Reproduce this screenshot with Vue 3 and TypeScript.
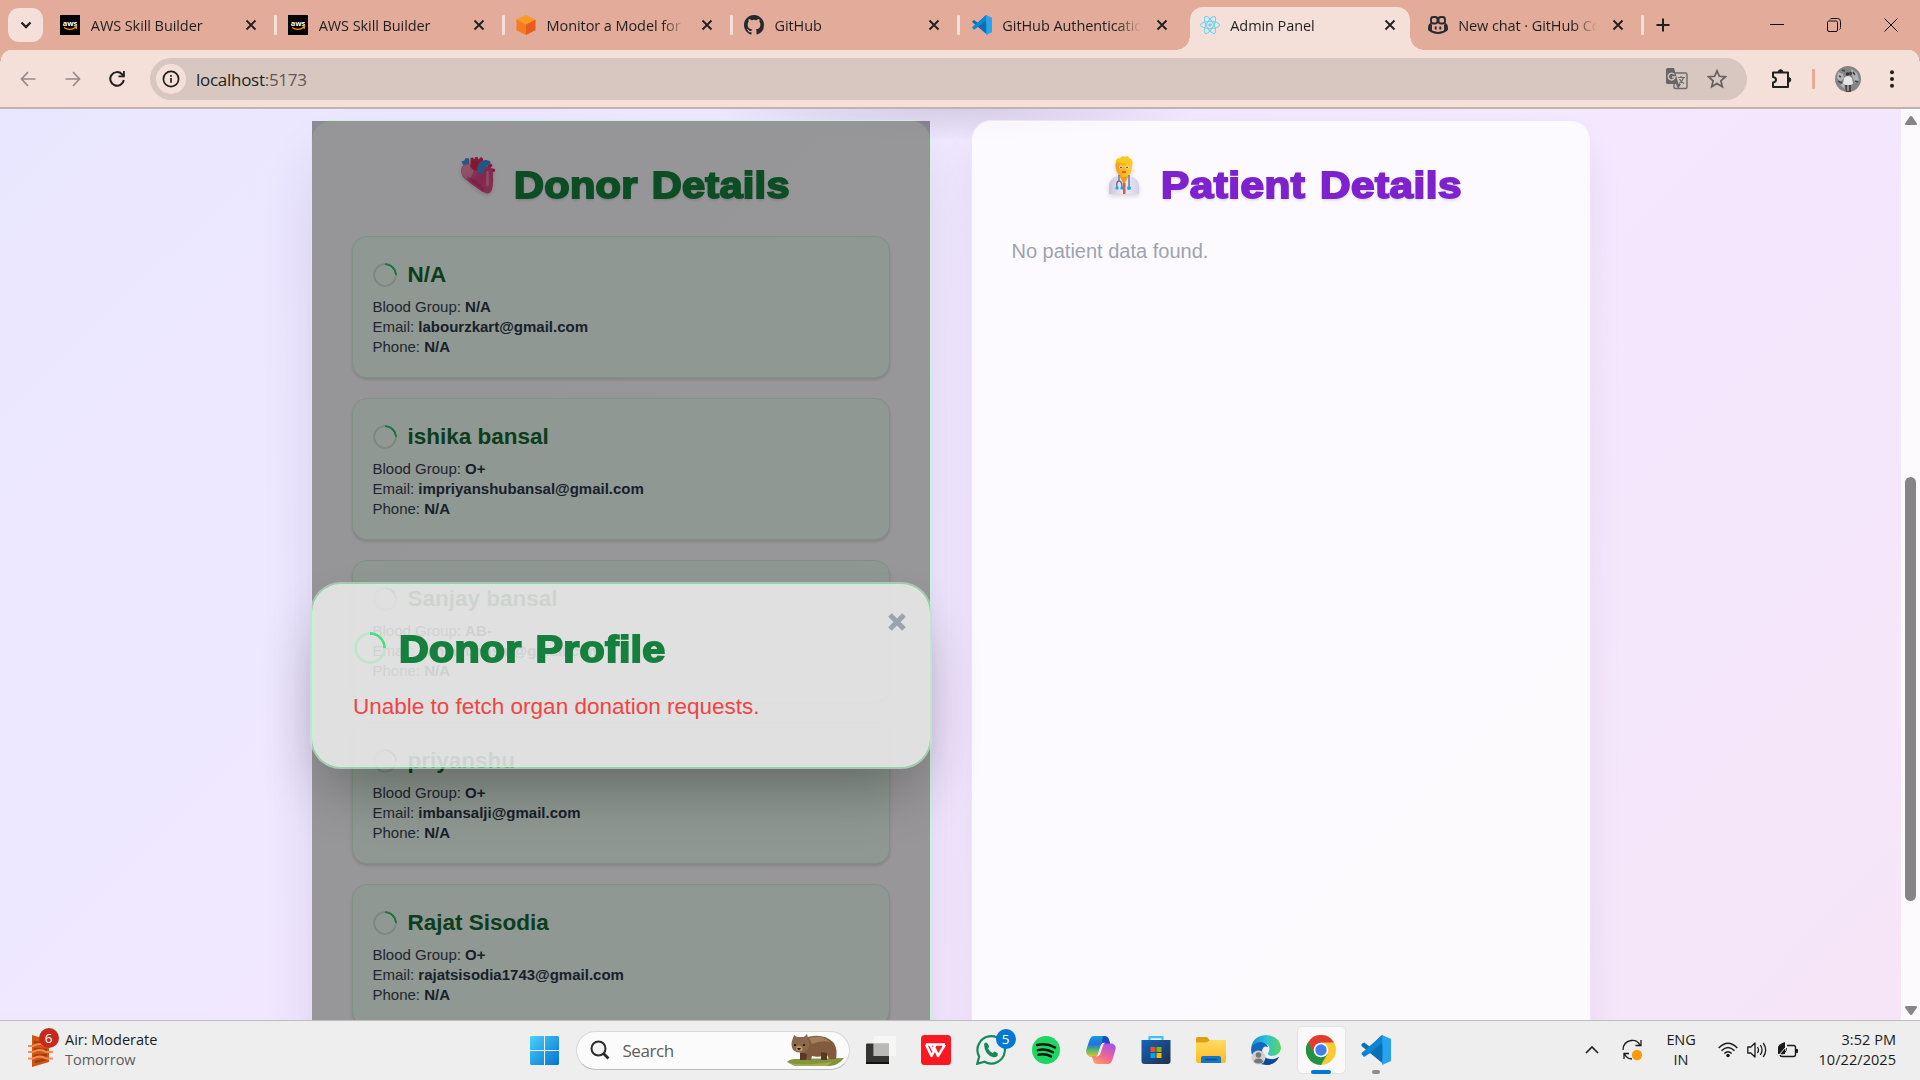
<script setup lang="ts">
interface Tab {
  icon: string
  title: string
  active?: boolean
}
interface Donor {
  name: string
  blood: string
  email: string
  phone: string
}

const tabs: Tab[] = [
  { icon: 'aws', title: 'AWS Skill Builder' },
  { icon: 'aws', title: 'AWS Skill Builder' },
  { icon: 'cube', title: 'Monitor a Model for Drift' },
  { icon: 'github', title: 'GitHub' },
  { icon: 'code', title: 'GitHub Authentication' },
  { icon: 'react', title: 'Admin Panel', active: true },
  { icon: 'copilot', title: 'New chat · GitHub Copilot' },
]

const donors: Donor[] = [
  { name: 'N/A', blood: 'N/A', email: 'labourzkart@gmail.com', phone: 'N/A' },
  { name: 'ishika bansal', blood: 'O+', email: 'impriyanshubansal@gmail.com', phone: 'N/A' },
  { name: 'Sanjay bansal', blood: 'AB-', email: 'sanjaybansal@gmail.com', phone: 'N/A' },
  { name: 'priyanshu', blood: 'O+', email: 'imbansalji@gmail.com', phone: 'N/A' },
  { name: 'Rajat Sisodia', blood: 'O+', email: 'rajatsisodia1743@gmail.com', phone: 'N/A' },
]
</script>

<template>
  <div class="screen">
    <svg class="defs" width="0" height="0">
      <defs>
        <symbol id="vscode" viewBox="0 0 30 30">
          <path d="M21 0 8.600 11.600 3.200 7.500 0.500 9 .500 11 23 29.500V21z" fill="#0a6fb5" />
          <path d="M0.500 19 3 22 8.500 18.500 22 7V0L.500 18z" fill="#0a86d2" />
          <path d="M21 0 30 4V26L21 30 21.500 22V8z" fill="#28a3f1" />
        </symbol>
      </defs>
    </svg>

    <header class="tabstrip">
      <div class="tab-search">
        <svg width="12" height="8" viewBox="0 0 12 8"><path d="M1.500 1.500 6 6l4.500-4.500" fill="none" stroke="#222" stroke-width="2.300" /></svg>
      </div>
      <div v-for="(tab, i) in tabs" :key="i" class="tab" :class="{ active: tab.active }">
        <svg v-if="tab.icon === 'aws'" class="fav" viewBox="0 0 20 20">
          <rect width="20" height="20" fill="#000" />
          <text x="10" y="10.500" text-anchor="middle" font-family="Open Sans, sans-serif" font-size="7.500" font-weight="700" fill="#fff">aws</text>
          <path d="M4 12.500q6 4 12-.300M14.500 11.800l2.200-.100-.500 2.100" fill="none" stroke="#f90" stroke-width="1.100" />
        </svg>
        <svg v-else-if="tab.icon === 'cube'" class="fav" viewBox="0 0 20 20">
          <path d="M10 0 19.500 4.500 10 9.500.500 4.500z" fill="#fd9a25" />
          <path d="M.500 4.500 10 9.500V20L.500 15.300z" fill="#f47b1f" />
          <path d="M19.500 4.500 10 9.500V20l9.500-4.700z" fill="#e85d1c" />
        </svg>
        <svg v-else-if="tab.icon === 'github'" class="fav" viewBox="0 0 16 16">
          <path fill="#24292f" d="M8 0C3.580 0 0 3.580 0 8c0 3.540 2.290 6.530 5.470 7.590.4.070.55-.17.55-.38 0-.19-.01-.82-.01-1.490-2.010.37-2.530-.49-2.690-.94-.09-.23-.48-.94-.82-1.130-.28-.15-.68-.52-.01-.53.63-.01 1.080.58 1.230.82.72 1.210 1.870.87 2.330.66.07-.52.28-.87.51-1.070-1.780-.2-3.640-.89-3.640-3.950 0-.87.31-1.590.82-2.150-.08-.2-.36-1.020.08-2.120 0 0 .67-.21 2.200.82a7.600 7.600 0 0 1 4 0c1.530-1.040 2.200-.82 2.200-.82.44 1.100.16 1.920.08 2.120.51.56.82 1.270.82 2.150 0 3.070-1.870 3.750-3.650 3.950.29.25.54.73.54 1.480 0 1.070-.01 1.930-.01 2.200 0 .21.15.46.55.38A8 8 0 0 0 16 8c0-4.420-3.580-8-8-8z" />
        </svg>
        <svg v-else-if="tab.icon === 'code'" class="fav"><use href="#vscode" /></svg>
        <svg v-else-if="tab.icon === 'react'" class="fav" viewBox="-10 -10 20 20" fill="none" stroke="#62d5f5" stroke-width="1">
          <circle r="1.800" fill="#62d5f5" stroke="none" />
          <ellipse rx="9.500" ry="3.600" /><ellipse rx="9.500" ry="3.600" transform="rotate(60)" /><ellipse rx="9.500" ry="3.600" transform="rotate(120)" />
        </svg>
        <svg v-else class="fav" viewBox="0 0 20 20" fill="none" stroke="#252a30" stroke-width="1.900">
          <rect x="3" y="2" width="6.500" height="6.500" rx="2.500" /><rect x="10.500" y="2" width="6.500" height="6.500" rx="2.500" />
          <path d="M3 8.500Q1 10 1 12.500v2Q5 18 10 18t9-3.500v-2Q19 10 17 8.500" /><path d="M3 9.500v6.500M17 9.500v6.500M7.700 11.500v3M12.300 11.500v3" />
        </svg>
        <span class="tab-title">{{ tab.title }}</span>
        <svg class="tab-x" viewBox="0 0 12 12"><path d="M1.500 1.500l9 9M10.500 1.500l-9 9" stroke="#1f1f1f" stroke-width="1.800" /></svg>
        <i v-if="!tab.active && i !== 4" class="tab-sep"></i>
      </div>
      <svg class="new-tab" viewBox="0 0 14 14"><path d="M7 .500v13M.500 7h13" stroke="#1f1f1f" stroke-width="2" /></svg>
      <div class="win-controls">
        <svg width="14" height="14" viewBox="0 0 14 14"><path d="M0 6.500h14" stroke="#111" /></svg>
        <svg width="14" height="14" viewBox="0 0 14 14" fill="none" stroke="#111"><rect x=".500" y="3" width="10" height="10.500" rx="1.500" /><path d="M3 1.500q.300-1 2-1h5.500q3 0 3 3v6q0 1.500-1 2" /></svg>
        <svg width="14" height="14" viewBox="0 0 14 14"><path d="M.500.500l13 13M13.500.500l-13 13" stroke="#111" /></svg>
      </div>
    </header>

    <div class="toolbar">
      <svg class="nav" viewBox="0 0 16 16"><path d="M15.500 8H1.500M8 1 1.500 8 8 15" fill="none" stroke="#96898a" stroke-width="1.700" /></svg>
      <svg class="nav" viewBox="0 0 16 16"><path d="M.500 8h14M8 1l6.500 7L8 15" fill="none" stroke="#96898a" stroke-width="1.700" /></svg>
      <svg class="nav" viewBox="0 0 16 16"><path d="M14.800 9A6.800 6.800 0 1 1 13 3.200L15 5.500" fill="none" stroke="#1f1f1f" stroke-width="2" /><path d="M15.800 0v6.300H9.500V4.500H14V0z" fill="#1f1f1f" /></svg>
      <div class="address">
        <span class="info">
          <svg width="18" height="18" viewBox="0 0 18 18"><circle cx="9" cy="9" r="7.600" fill="none" stroke="#1f1f1f" stroke-width="1.700" /><path d="M9 8v4.800M9 5v1.700" stroke="#1f1f1f" stroke-width="1.700" /></svg>
        </span>
        <span class="url">localhost<em>:5173</em></span>
        <svg class="translate" viewBox="0 0 22 22">
          <rect x="8" y="5" width="13" height="15.500" rx="1.500" fill="none" stroke="#706b6b" stroke-width="1.400" />
          <path d="M1.500 0H8l4.500 16H1.500Q0 16 0 14.500v-13Q0 0 1.500 0z" fill="#686568" />
          <path d="M10 16l2 5 3-5z" fill="#686568" />
          <path d="M8.300 6.400A3.400 3.400 0 1 0 9 9H6" fill="none" stroke="#d8c7c0" stroke-width="1.400" />
          <path d="M12 9.500h7M15 8v1.500M17.500 9.500q-1 4-4.500 6M13.500 11q1 2.500 4.500 4.500" fill="none" stroke="#706b6b" stroke-width="1.200" />
        </svg>
        <svg class="star" viewBox="0 0 20 20"><path d="M10 1.800l2.400 5.500 6 .500-4.500 4 1.400 5.900L10 14.500l-5.300 3.200 1.400-5.900-4.500-4 6-.500z" fill="none" stroke="#63605f" stroke-width="1.700" /></svg>
      </div>
      <svg class="puzzle" viewBox="0 0 22 22"><path d="M2 4.500h15v14.500H2v-4.500q3-.500 3-2.800T2 9z" fill="none" stroke="#1f1f1f" stroke-width="2" stroke-linejoin="round" /><path d="M7.300 4a2.300 2.300 0 0 1 4.600 0M17.500 9.500a2.300 2.300 0 0 1 0 4.600" fill="#1f1f1f" stroke="#1f1f1f" /></svg>
      <i class="bar"></i>
      <svg class="avatar" viewBox="0 0 26 26">
        <circle cx="13" cy="13" r="13" fill="#858585" />
        <path d="M3 6l5 2 1 4-4 4-3-4zM16 3l6 4 2 7-4 3-3-8zM5 19l4-2 1 6z" fill="#b4b4b4" />
        <path d="M4 10l2 1M18 6l2 3M7 4l3 1M20 15l3 1M3 15l4 2" stroke="#444" stroke-width="1.500" />
        <path d="M9 12q4-4 8 0l1 6-3 1v7h-4v-7l-3-1z" fill="#e6e6e6" /><circle cx="12.500" cy="8" r="1.800" fill="#333" /><circle cx="15.500" cy="7.500" r="1.700" fill="#444" /><path d="M10 19h6v7h-5z" fill="#444" /><path d="M13 17v8" stroke="#ddd" />
      </svg>
      <svg class="dots" viewBox="0 0 6 18"><circle cx="3" cy="2.200" r="2" /><circle cx="3" cy="9" r="2" /><circle cx="3" cy="15.800" r="2" /></svg>
    </div>

    <div class="viewport">
      <main class="page">
        <section class="panel donor">
          <h1 class="panel-title green">
            <svg class="emoji heart" viewBox="0 0 34 38">
              <defs><linearGradient id="hb" x1="0" y1="0" x2="1" y2="1"><stop offset="0" stop-color="#ef89b0" /><stop offset=".5" stop-color="#d9437f" /><stop offset="1" stop-color="#e0508c" /></linearGradient></defs>
              <path d="M.500 5.500 3.500 4.500 4.500 2 8 2.500 8.500 8 2.500 9.500z" fill="#3d94e0" />
              <path d="M9.500 9 9.500 2l2.500-.500 1 2L14.500 1h2l1 2.500L20 1l2 1.500V5l3-1 1 2-5 6-9 3zM26 10l4-2.500 1.500 2L29.500 12l4.500 1v2.500l-5 1z" fill="#e32a55" />
              <path d="M0 14Q.500 7.500 8 8q6 1 8 3 8-2 13 0 3.500 2 3 10 .500 7-1 12.500-1.500 4.500-5 4-4-.500-8-4Q10 28 4 23-.500 19 0 14z" fill="url(#hb)" />
              <path d="M1 14Q2 9 8 9q5 1 4.500 6T7 24Q0 20 1 14z" fill="#f096ba" opacity=".65" />
              <path d="M6 22q10 3 16 12" stroke="#bd2361" stroke-width="3" fill="none" opacity=".4" />
              <path d="M9 10q1-5 6-5 5-.500 7 3l-4 6q-6 2-9-4z" fill="#e12753" />
              <path d="M16.500 16Q15 5 25 4.200q4-.200 4.500 2 .200 3-2.500 3-3.500.300-4 6-2.500 4-6.500.800z" fill="#3592e3" />
              <path d="M26.500 16v13" stroke="#f7a7c7" stroke-width="2.500" stroke-linecap="round" opacity=".6" />
            </svg>
            <span>Donor Details</span>
          </h1>
          <div class="cards">
            <article v-for="d in donors" :key="d.name" class="card">
              <h2 class="name"><span class="spinner small"></span>{{ d.name }}</h2>
              <p>Blood Group: <b>{{ d.blood }}</b></p>
              <p>Email: <b>{{ d.email }}</b></p>
              <p>Phone: <b>{{ d.phone }}</b></p>
            </article>
          </div>
          <div class="backdrop"></div>
          <div class="modal">
            <svg class="close" viewBox="0 0 18 18"><path d="M2 2l14 14M16 2 2 16" stroke="#9ca3af" stroke-width="5" /></svg>
            <h1 class="modal-title"><span class="spinner large"></span><span class="wide">Donor Profile</span></h1>
            <p class="error">Unable to fetch organ donation requests.</p>
          </div>
        </section>

        <section class="panel patient">
          <h1 class="panel-title purple">
            <svg class="emoji doctor" viewBox="0 0 30 38">
              <defs>
                <linearGradient id="face" x1="0" x2="1"><stop offset="0" stop-color="#f79a18" /><stop offset="1" stop-color="#ffd02e" /></linearGradient>
                <linearGradient id="coat" x1="0" x2="1"><stop offset="0" stop-color="#cbc5d6" /><stop offset=".5" stop-color="#eeeafa" /><stop offset="1" stop-color="#d6d1e3" /></linearGradient>
              </defs>
              <path d="M0 38V29Q1 22 9 20h12q8 2 9 10v8z" fill="url(#coat)" />
              <path d="M10 19h10l-5 10z" fill="#f49a17" /><path d="M14 27h2.500v11H14z" fill="#cf623c" />
              <path d="M7 11Q5 2 11 2l2-2q3 1 6 0l1 2q5 1 3 9z" fill="#f7cb1b" />
              <path d="M6.500 11Q6 7 9 6q7 2 13 0l1 6q-1 9-8 9t-8.500-10z" fill="url(#face)" />
              <circle cx="12" cy="11" r="1.600" fill="#fff" /><circle cx="18" cy="11" r="1.600" fill="#fff" /><circle cx="12" cy="11.300" r=".9" fill="#402a28" /><circle cx="18" cy="11.300" r=".9" fill="#402a28" />
              <path d="M13 16h4" stroke="#b2412c" stroke-width="1.300" />
              <path d="M10 19v6M8 31q-1-6 2-6t3 6M20 19v11" fill="none" stroke="#596b8d" stroke-width="1.300" /><circle cx="8" cy="32" r="1.700" fill="#2ba1e3" /><circle cx="13" cy="32" r="1.700" fill="#2ba1e3" /><circle cx="20" cy="32" r="2" fill="#2ba1e3" />
            </svg>
            <span>Patient Details</span>
          </h1>
          <p class="empty">No patient data found.</p>
        </section>
      </main>
      <aside class="scrollbar">
        <svg width="12" height="9" viewBox="0 0 12 9"><path d="M6 0q.800 0 1.300.800L12 7.500q0 1.500-1 1.500H1Q0 9 0 7.500L4.700.800Q5.200 0 6 0z" fill="#858585" /></svg>
        <i class="thumb"></i>
        <svg width="12" height="9" viewBox="0 0 12 9"><path d="M6 9q.800 0 1.300-.800L12 1.500Q12 0 11 0H1Q0 0 0 1.500l4.700 6.700Q5.200 9 6 9z" fill="#858585" /></svg>
      </aside>
    </div>

    <footer class="taskbar">
      <div class="weather">
        <div class="weather-icon">
          <svg width="26" height="32" viewBox="0 0 26 32"><path d="M4 0 21 5V27L4 32z" fill="#cf5511" /><path d="M6 7l13 2M6 14l13 1M6 21l13-1M7 27l12-3" stroke="#a33d09" stroke-width="2.500" /><path d="M0 11h5q7-4 13 0h7M0 17h5q7-4 13 0h7M0 23.500h5q7-4 13 0h7" fill="none" stroke="#f28b55" stroke-width="2" /></svg>
          <span class="badge red">6</span>
        </div>
        <div class="weather-text"><span>Air: Moderate</span><span class="dim">Tomorrow</span></div>
      </div>

      <div class="apps">
        <div class="app start">
          <svg width="29" height="29" viewBox="0 0 29 29">
            <defs><linearGradient id="win" x1="0" y1="0" x2="1" y2="1" ><stop offset="0" stop-color="#4bd0fb" /><stop offset="1" stop-color="#0274d0" /></linearGradient></defs>
            <path d="M1 0h13v14H0V1zM15 0h13l1 1v13H15zM0 15h14v14H1l-1-1zM15 15h14v13l-1 1H15z" fill="url(#win)" />
          </svg>
        </div>
        <div class="search">
          <svg class="glass" width="20" height="20" viewBox="0 0 20 20"><circle cx="8.500" cy="8.500" r="7" fill="#f2f2f2" stroke="#2a2a2a" stroke-width="2" /><path d="M13.500 13.500l5 5" stroke="#2a2a2a" stroke-width="2.800" /></svg>
          <span>Search</span>
          <svg class="wombat" viewBox="0 0 58 32">
            <path d="M0 28q3-3 8-3l49-1q-5 7-14 8H8z" fill="#86933d" /><path d="M2 29q15 3 43-1l-5 4H9z" fill="#a4ab50" />
            <path d="M15 5Q34-3 46 8q5 6 3 17h-7l-2-4q-8 3-15 1l-1 4h-9z" fill="#805b3e" />
            <path d="M22 4q13-4 21 4-9-2-18 2z" fill="#a2805c" />
            <path d="M13 18l0 8h6l1-6zM34 18v8h6v-7z" fill="#563a27" />
            <path d="M6 4 7 1l3 2h7l3-3 1 4q3 8-1 13-8 4-14-1-3-6 0-12z" fill="#8c684a" />
            <path d="M9 13q3-3 6 0l1 3q-3 3-7 0z" fill="#b99067" /><circle cx="8" cy="11" r="1.100" fill="#20150f" /><circle cx="17" cy="11" r="1.100" fill="#20150f" /><path d="M10 14h4l-2 2.500z" fill="#20150f" />
          </svg>
        </div>
        <div class="app view"><svg width="30" height="28" viewBox="0 0 30 28"><rect y="7.500" width="23" height="20.500" rx="1" fill="#353533" /><path d="M0 26h23v2H0z" fill="#111" /><rect x="7.500" y="0" width="22.500" height="20" rx="1" fill="#ddd" opacity=".35" /><path d="M7.500 0H30v20h-7V7.500H7.500z" fill="#f6f6f6" /><path d="M7.500 7.500H23V20H7.500z" fill="#b9b9b8" /></svg></div>
        <div class="app"><svg width="30" height="30" viewBox="0 0 30 30"><rect width="30" height="30" rx="3.500" fill="#fc1721" /><path d="M5 9.500h19M5 9.500l5.500 11.500 3.500-7 3 7L24 9.500M9 9.500l3 6 2.500-6" fill="none" stroke="#fff" stroke-width="2.500" stroke-linejoin="round" /></svg></div>
        <div class="app">
          <svg width="30" height="30" viewBox="0 0 30 30"><path d="M1.200 28.800 3.200 21.500A13.700 13.700 0 1 1 8.500 26.800z" fill="none" stroke="#16895a" stroke-width="2.200" /><path d="M8 9q2-3 4 0l1 2.200q0 1.200-1 2.300 1.500 3 4.500 4.500l1.800-1.500q1 0 3.500 2 .500 4-4.300 3.800Q8.500 20 8 9z" fill="#16895a" /></svg>
          <span class="badge blue">5</span>
        </div>
        <div class="app"><svg width="28" height="28" viewBox="0 0 28 28"><circle cx="14" cy="14" r="14" fill="#1ed760" /><path d="M5 9q9.500-2.200 18 2.500M5.800 14.200q8-2 15.200 2M6.500 18.700q7-1.500 12.500 1.700" fill="none" stroke="#111" stroke-linecap="round" stroke-width="2.400" /></svg></div>
        <div class="app">
          <svg width="30" height="28" viewBox="0 0 30 28">
            <defs>
              <linearGradient id="cpa" x1="0" y1="0" x2="0" y2="1"><stop offset="0" stop-color="#139ed4" /><stop offset=".4" stop-color="#2370e4" /><stop offset=".65" stop-color="#50b46a" /><stop offset="1" stop-color="#e6c530" /></linearGradient>
              <linearGradient id="cpb" x1="0" y1="1" x2=".7" y2="0"><stop offset="0" stop-color="#fdb155" /><stop offset=".45" stop-color="#f46b8a" /><stop offset="1" stop-color="#b250e5" /></linearGradient>
            </defs>
            <path d="M8 0h11q3 0 4 4l1.500 5h-6q-3 0-4 3l-2 6q-1 3-4 3H4Q-1 18 .500 13L3.500 4Q5 0 8 0z" fill="url(#cpa)" />
            <path d="M17 0q5 0 6 4l1.500 5h-5q-3 0-4 3l-2 6z" fill="#1948c9" />
            <path d="M22 28H11q-3 0-4-4l-1.500-4H9q3 0 4-3l2.500-8q.500-1.500 3-1.500h8q4 2 3 6l-3 10Q25 28 22 28z" fill="url(#cpb)" />
            <path d="M12.500 16 15 8.500q1-2 4-2-2 2-3 6l-2 6q-1 2-4 2 2-1 2.500-4.500z" fill="#f3ecf5" />
          </svg>
        </div>
        <div class="app"><svg width="30" height="30" viewBox="0 0 30 30"><defs><linearGradient id="st" x1="0" y1="0" x2="1" y2="1"><stop offset="0" stop-color="#1465bc" /><stop offset="1" stop-color="#212d4b" /></linearGradient></defs><path d="M8.500 7V2h13v5" fill="none" stroke="#3dc4f5" stroke-width="1.800" /><path d="M.500 5h29v21q0 3-3 3h-23q-3 0-3-3z" fill="url(#st)" /><path d="M8.500 5V2.500h13V5" fill="none" stroke="#3dc4f5" stroke-width="1.600" /><path d="M9.500 12h5v5h-5z" fill="#f25022" /><path d="M15.500 12h5v5h-5z" fill="#7fba00" /><path d="M9.500 18h5v5h-5z" fill="#00a4ef" /><path d="M15.500 18h5v5h-5z" fill="#ffb900" /></svg></div>
        <div class="app"><svg width="30" height="28" viewBox="0 0 30 28"><defs><linearGradient id="fo" x1="0" y1="0" x2="0" y2="1"><stop offset="0" stop-color="#ffdb65" /><stop offset="1" stop-color="#fbbb20" /></linearGradient></defs><path d="M1 1h10l3 3.500h15V12H0V2z" fill="#dfa012" /><path d="M0 6.500h11L14 4h16v21q0 2-2 2H2q-2 0-2-2z" fill="url(#fo)" /><path d="M5 27v-5q0-2 2-2h16q2 0 2 2v5z" fill="#1475c9" /><path d="M9 23.500h12" stroke="#0a4c91" stroke-width="1.400" /></svg></div>
        <div class="app">
          <svg width="30" height="30" viewBox="0 0 30 30">
            <defs><linearGradient id="ed" x1="0" x2="1"><stop offset="0" stop-color="#128ad4" /><stop offset=".5" stop-color="#2cc1dc" /><stop offset="1" stop-color="#5bd65c" /></linearGradient></defs>
            <path d="M0 14Q1 1 15 0q14 1 15 13-1 8-10 8-4-1-3-3 3-4 0-8Q10 5 0 14z" fill="url(#ed)" /><path d="M0 14Q3 7 10 7q6 1 7 5-5-2-6 4 1 9 11 8 3 0 6-2-5 8-13 8Q1 29 0 14z" fill="#1268be" /><path d="M11 16q0 9 11 9l6-3q-4 8-13 8-8-4-4-14z" fill="#0d4895" />
            <circle cx="7.500" cy="22.500" r="7" fill="#d3d0cc" /><circle cx="7.500" cy="20" r="2.800" fill="#777" /><path d="M3 27q0-3.500 4.500-3.500T12 27q-4 3-9 0z" fill="#777" />
          </svg>
        </div>
        <div class="app current">
          <svg width="30" height="30" viewBox="0 0 30 30"><circle cx="15" cy="15" r="15" fill="#fcc934" /><path d="M2 7.500A15 15 0 0 0 15 30l6.500-11.300L15 15 8.500 18.700z" fill="#229144" /><path d="M2 7.500l6.500 11.300L15 15V7.500h13A15 15 0 0 0 2 7.500z" fill="#e23b30" /><path d="M2 7.500A15 15 0 0 0 1 20l8-1z" fill="#229144" /><circle cx="15" cy="15" r="7.300" fill="#fff" /><circle cx="15" cy="15" r="5.700" fill="#3f80ee" /></svg>
          <i class="running"></i>
        </div>
        <div class="app"><svg width="30" height="30"><use href="#vscode" /></svg><i class="idle"></i></div>
      </div>

      <div class="tray">
        <svg class="chev" width="14" height="8" viewBox="0 0 14 8"><path d="M1 7l6-6 6 6" fill="none" stroke="#1b1b1b" stroke-width="1.600" /></svg>
        <svg class="sync" width="21" height="22" viewBox="0 0 21 22"><path d="M1 11Q1 3 9 1.500q6-1 9 4.500M19 1v5.500h-5.500M2 20v-5.500h5M2.500 15Q5 20 10 20" fill="none" stroke="#1b1b1b" stroke-width="1.300" /><circle cx="15" cy="16" r="5.200" fill="#ff9a0d" /></svg>
        <div class="lang"><span>ENG</span><span>IN</span></div>
        <svg class="wifi" width="20" height="16" viewBox="0 0 20 16" fill="none" stroke="#1b1b1b" stroke-width="1.400"><path d="M.700 6q9.300-9.500 18.600 0M3.500 8.800q6.500-6.500 13 0M6.300 11.500q3.700-3.500 7.400 0" /><circle cx="10" cy="13.500" r="1.800" fill="#1b1b1b" stroke="none" /></svg>
        <svg class="sound" width="20" height="18" viewBox="0 0 20 18" fill="none" stroke="#1b1b1b" stroke-width="1.300"><path d="M.800 6h3L8 2v14L3.800 12h-3z" stroke-linejoin="round" /><path d="M10.500 6q2 3 0 6M13.300 4q3.500 5 0 10M16.200 2q5 7 0 14" /></svg>
        <svg class="battery" width="20" height="18" viewBox="0 0 20 18"><path d="M9 4.500h6.500q2 0 2 2v7q0 2-2 2H4q-1.500 0-2-1.500" fill="none" stroke="#1b1b1b" stroke-width="1.400" /><path d="M18 8.500h1.500v3H18z" fill="#1b1b1b" stroke="#1b1b1b" /><path d="M7 1v12H0V6q1-3 7-5z" fill="#1b1b1b" /><path d="M1 14 7 7" stroke="#eee" /><path d="M3.500 13q4.500 0 5-6" fill="none" stroke="#1b1b1b" /></svg>
        <div class="clock"><span>3:52 PM</span><span>10/22/2025</span></div>
      </div>
    </footer>
  </div>
</template>

<style>
body { margin: 0; overflow: hidden; }
</style>

<style scoped>
* { box-sizing: border-box; }
p, h1, h2 { margin: 0; }
svg { display: block; flex: none; }
.defs { position: absolute; }
.screen { width: 1920px; height: 1080px; display: flex; flex-direction: column; overflow: hidden; background: #f4e0d9; font-family: "Open Sans", "Noto Sans", sans-serif; }

.tabstrip { height: 50px; flex: none; display: flex; align-items: center; background: #e3ab99; padding-left: 8px; }
.tab-search { width: 35px; height: 34px; margin-right: 7px; border-radius: 11px; background: #f4e0d9; display: flex; align-items: center; justify-content: center; }
.tab { position: relative; width: 227.900px; height: 50px; flex: none; display: flex; align-items: center; padding-left: 10.300px; }
.tab.active::before { content: ""; position: absolute; z-index: 0; left: 1px; top: 7px; width: 220px; height: 43px; background: #f4e0d9; border-radius: 13px 13px 0 0; }
.tab.active::after { content: ""; position: absolute; left: -13px; bottom: 0; width: 248px; height: 14px; background: radial-gradient(circle at 0 0, transparent 13.500px, #f4e0d9 14px) left / 14px 14px no-repeat, radial-gradient(circle at 100% 0, transparent 13.500px, #f4e0d9 14px) right / 14px 14px no-repeat; }
.fav { position: relative; z-index: 1; width: 20px; height: 20px; margin-right: 10.500px; }
.tab-title { position: relative; z-index: 1; width: 144px; overflow: hidden; white-space: nowrap; font-size: 14.500px; line-height: 24px; padding-top: 2px; letter-spacing: -.08px; color: #1f1f1f; -webkit-mask-image: linear-gradient(90deg, #000 115px, transparent 139px); mask-image: linear-gradient(90deg, #000 115px, transparent 139px); }
.tab-x { position: relative; z-index: 1; width: 12px; height: 12px; margin-left: 10px; }
.tab-sep { width: 3px; height: 20px; border-radius: 1px; background: #f4e0d9; margin-left: 17px; }
.new-tab { width: 14px; height: 14px; margin-left: 11px; }
.win-controls { display: flex; gap: 43px; margin-left: auto; padding-right: 22px; }

.toolbar { height: 59px; flex: none; display: flex; align-items: center; background: #f4e0d9; border-bottom: 2px solid #c4b3ac; padding-left: 20px; position: relative; border-radius: 0; }
.toolbar::before { content: ""; position: absolute; left: 0; top: -1px; width: 12px; height: 12px; background: radial-gradient(circle at 100% 100%, transparent 11px, #e3ab99 11.500px); }
.toolbar::after { content: ""; position: absolute; right: 0; top: -1px; width: 12px; height: 12px; background: radial-gradient(circle at 0 100%, transparent 11px, #e3ab99 11.500px); }
.nav { width: 16px; height: 16px; margin-right: 29px; }
.nav:nth-child(2) { margin-right: 28px; }
.nav:nth-child(3) { margin-right: 25px; }
.address { width: 1597px; height: 42px; flex: none; display: flex; align-items: center; border-radius: 21px; background: #d7c7c0; padding: 0 20px 0 6px; }
.info { width: 30px; height: 30px; border-radius: 50%; background: #f4e0d9; display: flex; align-items: center; justify-content: center; margin-right: 10px; }
.url { flex: 1; font-size: 17px; letter-spacing: -.28px; line-height: 24px; padding-top: 2px; color: #1f1f1f; }
.url em { font-style: normal; color: #5d5856; }
.translate { width: 22px; height: 22px; margin-right: 19px; }
.star { width: 20px; height: 20px; }
.puzzle { width: 22px; height: 22px; margin-left: 24px; }
.bar { width: 3px; height: 20px; flex: none; border-radius: 1px; background: #e3ab99; margin-left: 19px; }
.avatar { width: 26px; height: 26px; margin-left: 20px; }
.dots { width: 6px; height: 18px; margin-left: 28px; fill: #1f1f1f; }

.viewport { height: 911px; flex: none; display: flex; overflow: hidden; }
.page { width: 1901px; height: 911px; overflow: hidden; display: flex; align-items: flex-start; justify-content: center; gap: 40px; padding-top: 11px; font-family: "Liberation Sans", Arial, sans-serif; background: radial-gradient(ellipse 240px 32px at 955px 0, rgba(90, 85, 110, .17), rgba(90, 85, 110, .09) 55%, transparent) no-repeat, linear-gradient(135deg, #e9e7ff 0%, #f3e8ff 58%, #f6e5f7 100%); }
.panel { position: relative; width: 619.500px; height: 1100px; flex: none; border: 1px solid #c5f5db; border-radius: 20px; background: rgba(255, 255, 255, .78); padding: 40px; box-shadow: 0 31px 62px -15px rgba(70, 40, 110, .2); }
.donor { width: 620.500px; }
.patient { border-color: #f0e3fc; box-shadow: 0 20px 40px -10px rgba(70, 40, 110, .13); padding-left: 39.500px; }
.panel-title { display: flex; justify-content: center; align-items: center; height: 45px; margin-bottom: 30px; padding-left: 9px; font-weight: 700; font-size: 36.500px; line-height: 45px; white-space: nowrap; text-shadow: 0 2px 3px rgba(0, 0, 0, .18); -webkit-text-stroke: 1.800px currentColor; word-spacing: 2px; }
.panel-title > span { position: relative; top: 1.500px; transform: scaleX(1.14); transform-origin: 0 50%; margin-right: 34px; }
.green { color: #15803d; letter-spacing: .2px; }
.purple { color: #7e22ce; letter-spacing: .4px; }
.purple > span { transform: scaleX(1.16); margin-right: 41px; }
.emoji { position: relative; top: -9px; filter: drop-shadow(0 2px 2px rgba(0, 0, 0, .15)); }
.heart { width: 34px; height: 38px; margin-right: 19.500px; }
.doctor { width: 30px; height: 38px; margin-right: 22px; }
.cards { display: flex; flex-direction: column; gap: 20px; }
.card { height: 142px; border: 1px solid #d3f3dd; border-radius: 15px; background: #effef3; padding: 20px; font-size: 15px; line-height: 20px; color: #374151; box-shadow: 0 2px 3px rgba(0, 0, 0, .13); }
.card b { color: #2c3648; font-weight: 700; }
.name { display: flex; align-items: center; height: 35px; margin-bottom: 5px; font-size: 22.500px; color: #166534; font-weight: 700; }
.spinner { border-radius: 50%; flex: none; background: conic-gradient(#4ade80 0 25%, #bfe3cc 25%); }
.small { width: 24px; height: 24px; margin: 0 10.500px 0 .500px; background: conic-gradient(#34c46e 0 25%, #cce7d8 25%); -webkit-mask: radial-gradient(circle, transparent 9.500px, #000 10px); mask: radial-gradient(circle, transparent 9.500px, #000 10px); }
.large { width: 32px; height: 32px; margin: -2px 13px 0 1px; -webkit-mask: radial-gradient(circle, transparent 13px, #000 13.500px); mask: radial-gradient(circle, transparent 13px, #000 13.500px); }
.backdrop { position: absolute; inset: 0; background: rgba(0, 0, 0, .4); }
.modal { position: absolute; z-index: 3; left: -1.500px; top: 461px; width: 621.500px; height: 187px; border: 2px solid rgba(187, 220, 198, .65); border-radius: 31px; background: rgba(235, 235, 235, .865); background-clip: padding-box; box-shadow: inset 0 0 0 1px #bbf7d0, 0 31px 62px -15px rgba(0, 0, 0, .32); padding: 40px 40px 40px 41px; }
.close { position: absolute; width: 18px; height: 18px; right: 23.500px; top: 29px; }
.modal-title { display: flex; align-items: center; height: 49px; color: #15803d; font-weight: 700; font-size: 36.500px; letter-spacing: .2px; word-spacing: 2px; -webkit-text-stroke: 1.800px currentColor; white-space: nowrap; }
.wide { position: relative; top: 1px; transform: scaleX(1.13); transform-origin: 0 50%; }
.error { margin-top: 16px; font-size: 22.500px; line-height: 35px; color: #ef4444; white-space: nowrap; }
.empty { font-size: 20px; line-height: 30px; color: #9ca3af; }

.scrollbar { width: 19px; height: 911px; background: #fcfafc; display: flex; flex-direction: column; align-items: center; padding: 7px 0 5px; }
.thumb { width: 11px; height: 424px; border-radius: 6px; background: #858585; margin: 352px 0 105px; }

.taskbar { height: 60px; flex: none; display: flex; align-items: center; background: #eee; border-top: 1px solid #bcbcbc; color: #1b1b1b; font-size: 14.500px; line-height: 20px; padding-bottom: 1px; }
.weather { display: flex; width: 517px; flex: none; padding-left: 28px; }
.weather-icon { position: relative; width: 37px; padding-top: 5px; }
.badge { position: absolute; width: 20px; height: 20px; border-radius: 50%; color: #fff; font-size: 13.500px; line-height: 20px; text-align: center; }
.red { left: 10.500px; top: -2px; background: #c42b1c; }
.blue { left: 29px; top: 3px; background: #0078d4; }
.weather-text { display: flex; flex-direction: column; letter-spacing: -.01px; }
.dim { color: #5d5d5d; }
.apps { display: flex; align-items: center; }
.app { position: relative; width: 49px; height: 48px; margin-right: 6px; display: flex; align-items: center; justify-content: center; flex: none; }
.start { width: 54px; margin-right: 4.500px; }
.search { width: 274px; height: 39px; margin-right: 7px; border: 1px solid #d8d8d8; border-bottom-color: #bcbcbc; border-radius: 20px; background: #fbfbfb; display: flex; align-items: center; padding-left: 13px; font-size: 17px; letter-spacing: -.45px; color: #5d5d5d; }
.search span { width: 164px; margin-left: 13px; padding-top: 1px; }
.wombat { width: 58px; height: 32px; }
.view { width: 48px; margin-right: 7px; }
.current { background: #f9f9f9; border: 1px solid #e3e3e3; border-radius: 5px; }
.running, .idle { position: absolute; bottom: 0; height: 4px; border-radius: 2px; }
.running { width: 20px; background: #0078d4; bottom: -1px; }
.idle { width: 8px; background: #8a8a8a; }
.tray { margin-left: auto; display: flex; align-items: center; padding-right: 24px; }
.chev { margin-right: 23px; }
.sync { margin-right: 22px; }
.lang { display: flex; flex-direction: column; align-items: center; width: 32px; margin-right: 21px; letter-spacing: -.1px; }
.wifi { margin-right: 9px; }
.sound { margin-right: 11px; }
.battery { margin-right: 18px; }
.clock { width: 80px; display: flex; flex-direction: column; align-items: flex-end; letter-spacing: .05px; white-space: nowrap; }
</style>
